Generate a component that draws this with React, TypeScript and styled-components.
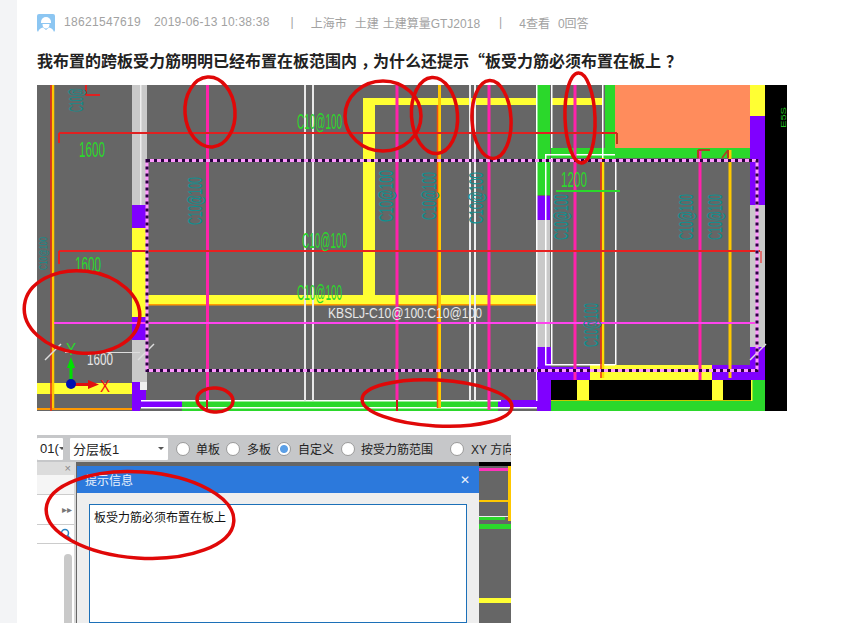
import React from "react";
import styled, { createGlobalStyle } from "styled-components";

const Global = createGlobalStyle`
  html, body { margin: 0; padding: 0; height: 100%; overflow: hidden; background: #f3f4f6; }
  #root { height: 100%; }
`;

const FONT = `"Liberation Sans", "Noto Sans CJK SC", sans-serif`;

const Page = styled.div`
  position: relative;
  width: 843px;
  height: 623px;
  overflow: hidden;
  padding-left: 17px;
  box-sizing: border-box;
  font-family: ${FONT};
`;
const Main = styled.main`
  background: #fff;
  height: 623px;
  padding: 14px 0 0 20px;
  box-sizing: border-box;
  display: flex;
  flex-direction: column;
`;
const Meta = styled.div`
  display: flex;
  align-items: center;
  height: 18px;
  font-size: 12px;
  color: #a2a2a2;
  white-space: pre;
`;
const Avatar = styled.svg`
  width: 18px;
  height: 18px;
  margin-right: 9px;
  flex: none;
`;
const MetaItem = styled.span<{ $gap: number; $ls?: number }>`
  margin-right: ${(p) => p.$gap}px;
  margin-bottom: 2px;
  letter-spacing: ${(p) => p.$ls || 0}px;
`;
const Title = styled.h1`
  margin: 18px 0 0;
  height: 20px;
  line-height: 20px;
  font-family: "Noto Sans CJK SC", sans-serif;
  font-size: 16px;
  font-weight: 700;
  color: #222;
  white-space: nowrap;
`;
const Punct = styled.span<{ $pad: number }>`
  display: inline-block;
  font-feature-settings: "halt";
  padding: 0 ${(p) => 8 - p.$pad}px 0 ${(p) => p.$pad}px;
`;
const Cad = styled.svg`
  display: block;
  width: 750px;
  height: 326px;
  margin-top: 15px;
  flex: none;
`;
const CadLabel = styled.text<{ $fill: string; $size?: number }>`
  font-family: "Liberation Sans", sans-serif;
  font-size: ${(p) => p.$size || 22}px;
  fill: ${(p) => p.$fill};
`;
const Shot = styled.section`
  width: 474px;
  height: 188px;
  margin-top: 24px;
  overflow: hidden;
  flex: none;
  display: flex;
  flex-direction: column;
  background: #666;
`;
const Toolbar = styled.div`
  height: 27px;
  background: #c6c7c9;
  display: flex;
  align-items: center;
  font-size: 12px;
  color: #222;
  white-space: nowrap;
  flex: none;
`;
const Select = styled.div<{ $w: number; $mr: number }>`
  width: ${(p) => p.$w}px;
  margin-right: ${(p) => p.$mr}px;
  height: 22px;
  background: #fff;
  border-radius: 1px;
  display: flex;
  align-items: center;
  justify-content: space-between;
  padding: 0 4px 0 3px;
  box-sizing: border-box;
  font-size: 13px;
  overflow: hidden;
  flex: none;
`;
const Caret = styled.i`
  width: 0;
  height: 0;
  border: 3px solid transparent;
  border-top: 3px solid #555;
  border-bottom: 0;
  flex: none;
`;
const Radio = styled.span<{ $on?: boolean; $mr: number }>`
  width: 14px;
  height: 14px;
  border-radius: 50%;
  background: ${(p) => (p.$on ? "radial-gradient(circle, #5b9fe6 0 3.5px, #fff 4.5px)" : "#fff")};
  border: 1px solid #9a9a9a;
  box-sizing: border-box;
  margin-right: ${(p) => p.$mr}px;
  flex: none;
`;
const RadioText = styled.span<{ $mr: number }>`
  margin-right: ${(p) => p.$mr}px;
  flex: none;
`;
const ShotBody = styled.div`
  flex: 1;
  display: flex;
  min-height: 0;
`;
const SidePanel = styled.aside`
  width: 37px;
  flex: none;
  background: #fff;
  border-right: 2px solid #d8d8d8;
  margin-right: 1px;
  display: flex;
  flex-direction: column;
  font-size: 10px;
  color: #777;
`;
const SideHead = styled.div`
  height: 13px;
  background: #dcdcdc;
  text-align: right;
  padding-right: 3px;
  line-height: 13px;
  font-size: 11px;
  color: #888;
`;
const SideRow = styled.div<{ $h: number; $bg?: string }>`
  height: ${(p) => p.$h}px;
  background: ${(p) => p.$bg || "#fff"};
  border-bottom: 1px solid #ccc;
  display: flex;
  align-items: center;
  justify-content: flex-end;
  padding-right: 2px;
  box-sizing: border-box;
`;
const Scroll = styled.div`
  width: 8px;
  flex: 1;
  margin: 10px 2px 0 auto;
  border-radius: 4px 4px 0 0;
  background: #c9c9c9;
`;
const Dialog = styled.div`
  width: 402px;
  flex: none;
  background: #eee;
  margin-top: 4px;
  display: flex;
  flex-direction: column;
`;
const DialogHead = styled.div`
  height: 27px;
  background: #2c79dc;
  color: #e8f0fb;
  display: flex;
  align-items: center;
  justify-content: space-between;
  padding: 0 9px 0 8px;
  font-size: 12px;
  flex: none;
`;
const DialogBox = styled.div`
  flex: 1;
  margin: 11px 12px 0;
  background: #fff;
  border: 1px solid #1c70b8;
  padding: 5px 4px;
  font-size: 12px;
  line-height: 16px;
  color: #111;
`;
const Backdrop = styled.svg`
  width: 32px;
  height: 161px;
  flex: none;
  display: block;
`;
const Overlay = styled.svg`
  position: absolute;
  left: 0;
  top: 0;
  width: 843px;
  height: 623px;
  pointer-events: none;
`;

type R = [number, number, number, number, string];
const rects: R[] = [
  [132, 85, 15, 120, "#c9c9c9"],
  [140, 85, 1.5, 120, "#eee"],
  [132, 205, 15, 23, "#8000ff"],
  [132, 228, 14, 89, "#ffff33"],
  [132, 317, 15, 23, "#8000ff"],
  [132, 340, 15, 42, "#c9c9c9"],
  [132, 382, 8, 29, "#8000ff"],
  [140, 382, 7, 8, "#f0f0f0"],
  [140, 390, 6, 11, "#8000ff"],
  [37, 383, 95, 11, "#ffff33"],
  [37, 408, 95, 2, "#ff9900"],
  [140, 400, 42, 8, "#8000ff"],
  [182, 401, 316, 10, "#2bd82b"],
  [498, 400, 39, 8, "#8000ff"],
  [498, 408, 39, 3, "#666"],
  [141, 407, 396, 1.5, "#fff"],
  [141, 400, 360, 1.5, "#fff"],
  [363, 98, 174, 7, "#ffff33"],
  [552, 98, 50, 7, "#ffff33"],
  [363, 98, 12, 197, "#ffff33"],
  [147, 295, 390, 10, "#ffff33"],
  [147, 304, 390, 1.5, "#ff9900"],
  [304, 85, 2, 316, "#e8e8e8"],
  [312, 85, 2, 316, "#e8e8e8"],
  [469, 85, 2, 316, "#eee"],
  [474, 85, 2, 316, "#eee"],
  [537, 85, 13, 110, "#2bd82b"],
  [537, 196, 13, 24, "#8000ff"],
  [537, 220, 13, 127, "#c9c9c9"],
  [537, 347, 14, 64, "#8000ff"],
  [536, 85, 1.5, 316, "#fff"],
  [551, 85, 1.5, 280, "#fff"],
  [605, 85, 10, 75, "#2bd82b"],
  [551, 148, 54, 10, "#2bd82b"],
  [615, 148, 135, 10, "#2bd82b"],
  [615, 85, 135, 63, "#ff8c5c"],
  [602, 85, 1.5, 293, "#fff"],
  [750, 85, 15, 31, "#ffff33"],
  [750, 116, 15, 89, "#8000ff"],
  [750, 205, 15, 142, "#c9c9c9"],
  [750, 347, 15, 33, "#8000ff"],
  [765, 85, 22, 326, "#000"],
  [537, 367, 53, 13, "#8000ff"],
  [590, 365, 122, 15, "#ffff33"],
  [712, 365, 38, 15, "#8000ff"],
  [750, 365, 15, 15, "#8000ff"],
  [551, 380, 214, 31, "#2bd82b"],
  [551, 380, 201, 21, "#000"],
  [577, 380, 12, 20, "#ffff33"],
  [712, 380, 11, 20, "#ffff33"],
  [551, 400, 201, 1, "#c8c800"],
  [751, 380, 1.5, 21, "#ffff33"],
  [545, 154, 1.5, 211, "#fff"],
  [615, 160, 1.5, 205, "#fff"],
  [545, 154, 70, 1.5, "#fff"],
  [545, 364, 70, 1.5, "#fff"],
];
type L = [number, number, number, number, string, number];
const lines: L[] = [
  [53, 85, 53, 408, "#ffc800", 2.5],
  [51, 85, 51, 411, "#ee2a10", 1.5],
  [207.5, 85, 207.5, 400, "#ff22aa", 3],
  [207, 400, 207, 411, "#d01818", 2],
  [397, 85, 397, 400, "#ff22aa", 3],
  [397, 400, 397, 411, "#d01818", 2],
  [439.5, 85, 439.5, 408, "#ffc800", 3],
  [437.5, 105, 437.5, 408, "#f05010", 1.5],
  [489, 85, 489, 410, "#ff22aa", 3],
  [575, 85, 575, 380, "#ff22aa", 3],
  [603, 158, 603, 378, "#ffdd00", 2.5],
  [601, 158, 601, 378, "#f03010", 1.5],
  [700, 150, 700, 380, "#ff22aa", 3],
  [730, 150, 730, 378, "#ffc800", 3],
  [59, 133, 617, 133, "#e02020", 2],
  [59, 133, 59, 143, "#e02020", 2],
  [617, 133, 617, 144, "#c03818", 2],
  [59, 251, 760, 251, "#e82020", 2],
  [59, 251, 59, 264, "#e02020", 2],
  [761, 251, 761, 263, "#e07070", 2],
  [54, 323, 755, 323, "#ff44ee", 2],
  [556, 191, 620, 191, "#2bd82b", 2],
  [698, 150, 710, 150, "#b04020", 2],
  [698, 150, 698, 158, "#b04020", 2],
  [86, 85, 86, 95.5, "#e02020", 2],
  [86, 95, 100, 95, "#e02020", 2],
  [722, 158, 728, 150, "#b04020", 1.5],
  [728, 150, 728, 158, "#b04020", 2],
  [65, 352.5, 140, 352.5, "#ddd", 1],
  [45, 360, 61, 344, "#ddd", 1.5],
  [138, 360, 154, 344, "#ddd", 1.5],
  [750, 360, 766, 344, "#ddd", 1.5],
];
type T = [string, number, number, number, string, boolean, number?];
const texts: T[] = [
  ["C10@100", 297, 129, 45, "#2bd82b", false],
  ["1600", 79, 157, 26, "#2bd82b", false],
  ["C10@100", 302, 248, 45, "#2bd82b", false],
  ["1600", 75, 272, 26, "#2bd82b", false],
  ["C10@100", 297, 300, 45, "#2bd82b", false],
  ["1200", 561, 187, 26, "#2bd82b", false],
  ["1600", 87, 365, 26, "#e8e8e8", false, 17],
  ["C10@", 83, 112, 24, "#168a8a", true, 20],
  ["C10@100", 202, 225, 48, "#108f8f", true, 20],
  ["C10@100", 393, 222, 52, "#108f8f", true, 20],
  ["C10@100", 436, 220, 48, "#108f8f", true, 20],
  ["C10@100", 483, 224, 52, "#108f8f", true, 20],
  ["C10@100", 568, 240, 46, "#108f8f", true, 20],
  ["C10@100", 598, 347, 44, "#108f8f", true, 20],
  ["C10@100", 693, 240, 46, "#108f8f", true, 20],
  ["C10@100", 722, 240, 46, "#108f8f", true, 20],
  ["C10@100", 47, 270, 33, "#168a8a", true, 11],
];
const ellipses: [number, number, number, number, number][] = [
  [210, 112, 25, 35, -4],
  [383, 116, 38, 35, 0],
  [434.5, 115.5, 23, 38, -4],
  [491.5, 119.5, 19.5, 39, -3],
  [580, 118, 15, 45, -2],
  [82, 312, 58, 41, 7],
  [215, 400, 18, 12, 5],
  [437, 403, 75, 23, 3],
  [140, 515, 94, 43, 4],
];

function CadDrawing() {
  return (
    <Cad viewBox="37 85 750 326">
      <rect x={37} y={85} width={750} height={326} fill="#666" />
      {rects.map(([x, y, w, h, c], i) => (
        <rect key={i} x={x} y={y} width={w} height={h} fill={c} />
      ))}
      {lines.map(([x1, y1, x2, y2, c, w], i) => (
        <line key={i} x1={x1} y1={y1} x2={x2} y2={y2} stroke={c} strokeWidth={w} />
      ))}
      <rect x={147} y={160.5} width={610} height={210} fill="none" stroke="#ff99ff" strokeWidth={3} />
      <rect x={147} y={160.5} width={610} height={210} fill="none" stroke="#2a0040" strokeWidth={3} strokeDasharray="3 4" />
      {texts.map(([s, x, y, w, c, v, size], i) => (
        <CadLabel
          key={i}
          $fill={c}
          $size={size}
          transform={v ? `rotate(-90 ${x} ${y})` : undefined}
          x={x}
          y={y}
          textLength={w}
          lengthAdjust="spacingAndGlyphs"
        >
          {s}
        </CadLabel>
      ))}
      <CadLabel $fill="#e8e8e8" $size={15} x={328} y={318} textLength={154} lengthAdjust="spacingAndGlyphs">
        KBSLJ-C10@100:C10@100
      </CadLabel>
      <CadLabel $fill="#22c022" $size={8} x={786} y={128} textLength={21} lengthAdjust="spacingAndGlyphs" transform="rotate(-90 786 128)">
        E5S
      </CadLabel>
      <CadLabel $fill="#2bd82b" $size={17} x={66} y={355} textLength={10} lengthAdjust="spacingAndGlyphs">Y</CadLabel>
      <CadLabel $fill="#ee1111" $size={17} x={100} y={392} textLength={10} lengthAdjust="spacingAndGlyphs">X</CadLabel>
      <path d="M69.5 384V368H67L71 357L75 368H72.5V384Z" fill="#00e000" />
      <path d="M71 383H88V380L99 384.5L88 389V386H71Z" fill="#e01010" />
      <circle cx={71} cy={384} r={5} fill="#0010b0" />
    </Cad>
  );
}

export default function App() {
  return (
    <Page>
      <Global />
      <Main>
        <Meta>
          <Avatar viewBox="0 0 18 18">
            <rect width={18} height={18} rx={2} fill="#8cc6f2" />
            <path d="M4 8a5 5 0 0 1 10 0v1H4Z" fill="#fff" />
            <path d="M5.5 10h7c0 3-1.5 4.5-3.5 4.5S5.5 13 5.5 10Z" fill="#fff" />
            <path d="M1 18c1-3 3-4 5-4.5L9 16l3-2.5c2 .5 4 1.5 5 4.5Z" fill="#fff" />
          </Avatar>
          <MetaItem $gap={13} $ls={0.32}>18621547619</MetaItem>
          <MetaItem $gap={21} $ls={0.22}>2019-06-13 10:38:38</MetaItem>
          <MetaItem $gap={17}>|</MetaItem>
          <MetaItem $gap={8}>上海市</MetaItem>
          <MetaItem $gap={4}>土建</MetaItem>
          <MetaItem $gap={19}>土建算量GTJ2018</MetaItem>
          <MetaItem $gap={17}>|</MetaItem>
          <MetaItem $gap={8}>4查看</MetaItem>
          <MetaItem $gap={0}>0回答</MetaItem>
        </Meta>
        <Title>
          我布置的跨板受力筋明明已经布置在板范围内<Punct $pad={4}>，</Punct>为什么还提示“板受力筋必须布置在板上<Punct $pad={5}>？</Punct>
        </Title>
        <CadDrawing />
        <Shot>
          <Toolbar>
            <Select $w={26} $mr={7}>
              <span>01(</span>
              <Caret />
            </Select>
            <Select $w={98} $mr={8}>
              <span>分层板1</span>
              <Caret />
            </Select>
            <Radio $mr={6} />
            <RadioText $mr={6}>单板</RadioText>
            <Radio $mr={7} />
            <RadioText $mr={6}>多板</RadioText>
            <Radio $on $mr={7} />
            <RadioText $mr={7}>自定义</RadioText>
            <Radio $mr={6} />
            <RadioText $mr={17}>按受力筋范围</RadioText>
            <Radio $mr={7} />
            <RadioText $mr={0}>XY 方向</RadioText>
          </Toolbar>
          <ShotBody>
            <SidePanel>
              <SideHead>×</SideHead>
              <SideRow $h={20} $bg="#f5f5f5" />
              <SideRow $h={30}>▸▸</SideRow>
              <SideRow $h={19}>
                <svg width={12} height={12} viewBox="0 0 12 12" fill="none" stroke="#2a82c0" strokeWidth={1.5}>
                  <circle cx={5} cy={5} r={3.5} />
                  <path d="M7.5 7.5L11 11" />
                </svg>
              </SideRow>
              <Scroll />
            </SidePanel>
            <Dialog>
              <DialogHead>
                <span>提示信息</span>
                <span>✕</span>
              </DialogHead>
              <DialogBox>板受力筋必须布置在板上</DialogBox>
            </Dialog>
            <Backdrop viewBox="479 462 32 161">
              <rect x={479} y={462} width={32} height={161} fill="#666" />
              <rect x={479} y={462} width={32} height={4} fill="#000" />
              <rect x={479} y={468} width={29} height={3} fill="#ff33bb" />
              <rect x={479} y={500} width={30} height={2} fill="#ffc800" />
              <rect x={508} y={466} width={3} height={55} fill="#ffc800" />
              <rect x={479} y={516} width={29} height={1} fill="#eee" />
              <rect x={479} y={517} width={26} height={3} fill="#2bd82b" />
              <rect x={479} y={524} width={32} height={5} fill="#2bd82b" />
              <rect x={479} y={598} width={32} height={5} fill="#ffff33" />
            </Backdrop>
          </ShotBody>
        </Shot>
      </Main>
      <Overlay viewBox="0 0 843 623">
        {ellipses.map(([cx, cy, rx, ry, a], i) => (
          <ellipse
            key={i}
            cx={cx}
            cy={cy}
            rx={rx}
            ry={ry}
            transform={`rotate(${a} ${cx} ${cy})`}
            fill="none"
            stroke="#e00808"
            strokeWidth={3.5}
          />
        ))}
      </Overlay>
    </Page>
  );
}
